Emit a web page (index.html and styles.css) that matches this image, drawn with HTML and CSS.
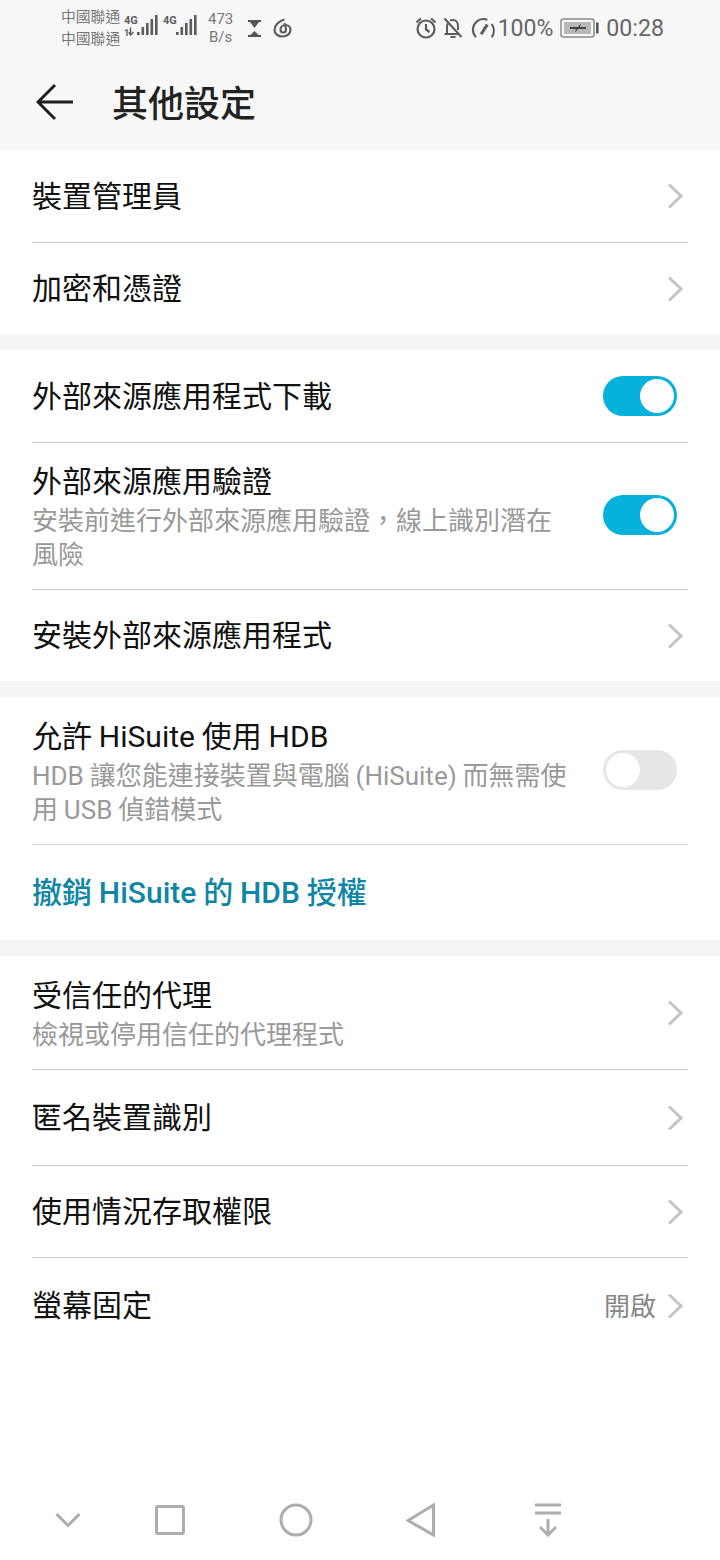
FILE: index.html
```html
<!DOCTYPE html>
<html lang="zh-Hant">
<head>
<meta charset="utf-8">
<title>其他設定</title>
<link rel="stylesheet" href="styles.css">
</head>
<body>
<div class="screen">
  <header class="top">
    <div class="status">
      <div class="status-left">
        <div class="carrier"><span>中國聯通</span><span>中國聯通</span></div>
        <div class="sig sig-a">
          <svg width="34" height="32" viewBox="0 0 34 32"><text x="0" y="12" class="net">4G</text><text x="0" y="24" class="net small">1</text><path d="M6.500 15.500v7M4.800 20l1.700 3 3-3" fill="none" stroke="#5c5c5c" stroke-width="1.400"/><g fill="#5c5c5c"><rect x="13" y="20" width="2.600" height="3"/><rect x="17.500" y="15" width="2.600" height="8"/><rect x="22" y="11" width="2.600" height="12"/><rect x="26.500" y="7" width="2.600" height="16"/><rect x="31" y="3" width="2.600" height="20"/></g></svg>
        </div>
        <div class="sig sig-b">
          <svg width="34" height="32" viewBox="0 0 34 32"><text x="0" y="12" class="net">4G</text><g fill="#5c5c5c"><rect x="13" y="20" width="2.600" height="3"/><rect x="17.500" y="15" width="2.600" height="8"/><rect x="22" y="11" width="2.600" height="12"/><rect x="26.500" y="7" width="2.600" height="16"/><rect x="31" y="3" width="2.600" height="20"/></g></svg>
        </div>
        <div class="speed"><span>473</span><span>B/s</span></div>
        <svg class="ic-glass" width="13" height="17" viewBox="0 0 13 17"><path d="M0 1h13M0 16h13" stroke="#555" stroke-width="2"/><path d="M2 2h9L6.500 8zM6.500 11 10.500 15h-8z" fill="#555"/></svg>
        <svg class="ic-net" width="20" height="20" viewBox="0 0 20 20" fill="none" stroke="#5c5c5c" stroke-width="2.200"><path d="M11.500 1.500C6 3 1.500 7 1.500 12c0 3.500 3.500 6.500 8 6.500 4.500 0 8-2.800 8-6.500 0-3-2.500-5-5-5-3 0-5 2.200-5 4.500 0 1.800 1.200 3 2.700 3 1.600 0 2.800-1.300 2.800-3 0-1.500-.6-3.500-1.500-6.500"/></svg>
      </div>
      <div class="status-right">
        <svg width="22" height="22" viewBox="0 0 22 22" fill="none" stroke="#5c5c5c" stroke-width="2.200"><circle cx="11" cy="12" r="8.500"/><path d="M11 7v5.500l3.500 2.500M1.500 5.500 6 1.500M20.500 5.500 16 1.500"/></svg>
        <svg class="ic-bell" width="20" height="22" viewBox="0 0 20 22" fill="none" stroke="#5c5c5c" stroke-width="2"><path d="M1.500 17h14M4 17V10c0-2 .5-3 1-4M7 3.800C8 3 9 3 10 3c3 0 5 2.500 5 6v4M7.500 20h5M1.500 1.500 18.500 20"/></svg>
        <svg class="ic-gauge" width="24" height="22" viewBox="0 0 25 22" fill="none" stroke="#5c5c5c" stroke-width="2.300"><path d="M5 20.500C1.500 16 1 11 4 6.500 7 2.500 12 .5 17 2.500M21.500 7c3 4 3 9.500 0 13.500"/><path d="M10.500 17.500 17 7.500" stroke-width="3.200"/></svg>
        <span class="pct">100%</span>
        <svg class="ic-bat" width="39" height="20" viewBox="0 0 39 20"><rect x="1" y="1" width="33" height="18" rx="2.500" fill="#f7f7f7" stroke="#8a8a8a" stroke-width="1.500"/><rect x="4" y="4" width="27" height="12" fill="#b8b8b8"/><path d="M10 9h8l3-3.500-1 3.500h6v2h-8l-3 3.500 1-3.500h-6z" fill="#444"/><rect x="36" y="4.500" width="2.600" height="11" fill="#555"/></svg>
        <span class="time">00:28</span>
      </div>
    </div>
    <div class="titlebar">
      <svg class="back" width="38" height="38" viewBox="0 0 38 38" fill="none" stroke="#1f1f1f" stroke-width="3"><path d="M19 2 2 19 19 36M2.500 19H37"/></svg>
      <h1>其他設定</h1>
    </div>
  </header>

  <main>
    <section class="group">
      <a class="row h93"><div class="txt"><div class="t">裝置管理員</div></div><svg class="chev" width="16" height="26" viewBox="0 0 16 26"><path d="M2 1.500 14 13 2 24.500"/></svg></a>
      <a class="row h91"><div class="txt"><div class="t">加密和憑證</div></div><svg class="chev" width="16" height="26" viewBox="0 0 16 26"><path d="M2 1.500 14 13 2 24.500"/></svg></a>
    </section>
    <section class="group">
      <a class="row h93"><div class="txt"><div class="t">外部來源應用程式下載</div></div><span class="sw on"></span></a>
      <a class="row h147"><div class="txt"><div class="t">外部來源應用驗證</div><div class="s">安裝前進行外部來源應用驗證，線上識別潛在風險</div></div><span class="sw on"></span></a>
      <a class="row h91"><div class="txt"><div class="t">安裝外部來源應用程式</div></div><svg class="chev" width="16" height="26" viewBox="0 0 16 26"><path d="M2 1.500 14 13 2 24.500"/></svg></a>
    </section>
    <section class="group">
      <a class="row h148"><div class="txt"><div class="t">允許 HiSuite 使用 HDB</div><div class="s">HDB 讓您能連接裝置與電腦 (HiSuite) 而無需使用 USB 偵錯模式</div></div><span class="sw off"></span></a>
      <a class="row h95"><div class="txt"><div class="t link">撤銷 HiSuite 的 HDB 授權</div></div></a>
    </section>
    <section class="group">
      <a class="row h114"><div class="txt"><div class="t">受信任的代理</div><div class="s">檢視或停用信任的代理程式</div></div><svg class="chev" width="16" height="26" viewBox="0 0 16 26"><path d="M2 1.500 14 13 2 24.500"/></svg></a>
      <a class="row h96"><div class="txt"><div class="t">匿名裝置識別</div></div><svg class="chev" width="16" height="26" viewBox="0 0 16 26"><path d="M2 1.500 14 13 2 24.500"/></svg></a>
      <a class="row h92"><div class="txt"><div class="t">使用情況存取權限</div></div><svg class="chev" width="16" height="26" viewBox="0 0 16 26"><path d="M2 1.500 14 13 2 24.500"/></svg></a>
      <a class="row h95"><div class="txt"><div class="t">螢幕固定</div></div><span class="val">開啟</span><svg class="chev" width="16" height="26" viewBox="0 0 16 26"><path d="M2 1.500 14 13 2 24.500"/></svg></a>
    </section>
  </main>

  <nav class="nav">
    <svg class="n1" width="28" height="18" viewBox="0 0 28 18"><path d="M2.500 3 14 14.500 25.500 3"/></svg>
    <svg class="n2" width="30" height="30" viewBox="0 0 30 30"><rect x="1.500" y="1.500" width="27" height="27" rx="1.500"/></svg>
    <svg class="n3" width="34" height="34" viewBox="0 0 34 34"><circle cx="17" cy="17" r="15"/></svg>
    <svg class="n4" width="30" height="34" viewBox="0 0 30 34"><path d="M27.500 2 2 17.500 27.500 32z"/></svg>
    <svg class="n5" width="28" height="34" viewBox="0 0 28 34"><path d="M1 2h26M1 10h26M14 16v16M6 24l8 8 8-8"/></svg>
  </nav>
</div>
</body>
</html>
```
FILE: styles.css
```css
* { box-sizing: border-box; }
html, body { margin: 0; padding: 0; }
body {
  width: 720px;
  height: 1560px;
  background: #fff;
  font-family: Roboto, "Noto Sans CJK TC", sans-serif;
  overflow: hidden;
}
.screen { width: 720px; height: 1560px; display: flex; flex-direction: column; background: #fff; }
.top { flex: none; height: 150px; background: #f7f7f7; display: flex; flex-direction: column; }
.status {
  height: 56px;
  padding: 0 56px 0 61px;
  display: flex;
  justify-content: space-between;
  align-items: center;
  color: #5c5c5c;
}
.status-left, .status-right { display: flex; align-items: center; }
.carrier { display: flex; flex-direction: column; font-size: 14.800px; line-height: 22px; width: 63px; color: #777; }
.sig { width: 34px; height: 32px; }
.sig svg { display: block; }
.sig-b { margin-left: 5px; }
.net { font-family: "Liberation Sans Narrow", Roboto, sans-serif; font-size: 11px; font-weight: 700; fill: #5c5c5c; }
.net.small { font-size: 9px; }
.speed { display: flex; flex-direction: column; align-items: center; font-size: 15px; line-height: 18px; margin-left: 11px; color: #777; }
.ic-glass { margin-left: 15px; }
.ic-net { margin-left: 12px; }
.status-right svg { display: block; }
.ic-bell { margin-left: 6px; }
.ic-gauge { margin-left: 8px; }
.pct { font-size: 23px; margin-left: 3px; color: #666; }
.ic-bat { margin-left: 7px; }
.time { font-size: 23.200px; margin-left: 7px; color: #666; }
.titlebar { flex: 1; display: flex; align-items: center; padding: 0 0 0 36px; }
.back { display: block; margin-bottom: 2px; }
h1 { margin: 0 0 0 38px; padding-top: 4px; font-size: 36px; font-weight: 500; color: #222; line-height: 48px; }
main { flex: 1; display: flex; flex-direction: column; gap: 16px; position: relative; }
.group { background: #fff; display: flex; flex-direction: column; position: relative; }
.group + .group::before { content: ""; position: absolute; top: -16px; left: 0; right: 0; height: 16px; background: #f5f5f5; }
.row { display: flex; align-items: center; margin: 0 32px; border-bottom: 1px solid #cfcfcf; }
.group .row:last-child { border-bottom: 0; }
.h91 { height: 91px; }
.h92 { height: 92px; }
.h93 { height: 93px; }
.h95 { height: 95px; }
.h96 { height: 96px; }
.h114 { height: 114px; }
.h147 { height: 147px; }
.h148 { height: 148px; }
.txt { flex: 1; min-width: 0; padding: 1px 30px 0 0; word-spacing: -0.600px; }
.t { font-size: 30px; line-height: 38px; color: #111; }
.s { font-size: 26px; line-height: 34px; color: #999; margin: 3px 0 -2px; }
.link { color: #0f86a5; font-weight: 500; }
.val { font-size: 26px; color: #888; margin: -2px 11px 0 0; }
.chev { display: block; flex: none; margin-right: 5px; }
.chev path { fill: none; stroke: #c4c4c4; stroke-width: 3; }
.sw { flex: none; width: 74px; height: 40px; border-radius: 20px; margin-right: 11px; position: relative; display: block; }
.h147 .sw, .h148 .sw { margin-top: -2px; }
.sw::after { content: ""; position: absolute; top: 3px; width: 34px; height: 34px; border-radius: 50%; background: #fff; }
.sw.on { background: #06b1db; }
.sw.on::after { right: 3px; }
.sw.off { background: #e6e6e6; }
.sw.off::after { left: 3px; }
.nav { flex: none; height: 70px; padding-bottom: 10px; display: flex; align-items: center; }
.nav svg { flex: none; display: block; fill: none; stroke: #adadad; stroke-width: 3; }
.n1 { margin-left: 54px; }
.n2 { margin-left: 73px; }
.n3 { margin-left: 94px; }
.n4 { margin-left: 93px; }
.n5 { margin-left: 98px; }
```
